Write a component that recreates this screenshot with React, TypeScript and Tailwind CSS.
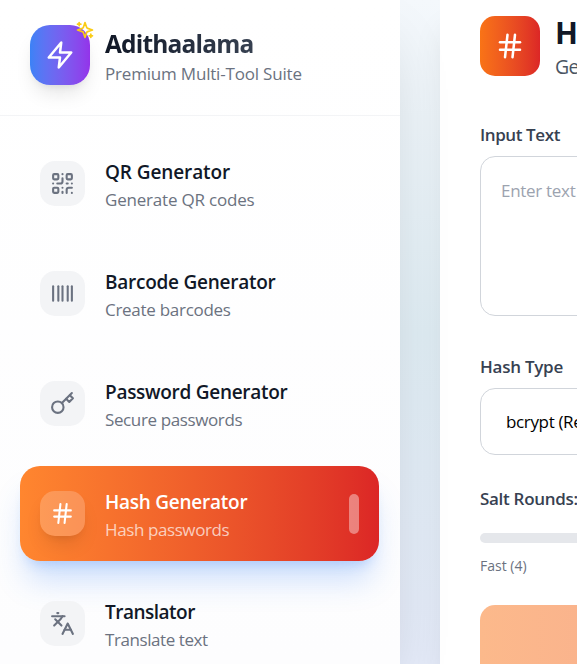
import React from "react";
import { QrCode, Barcode, Hash, Languages } from "lucide-react";

type Item = { title: string; sub: string; icon: React.ReactNode; titleCls: string; subCls: string; active?: boolean };

function KeyIcon() {
  return (
    <svg width="25" height="25" viewBox="0 0 24 24" fill="none" stroke="currentColor" strokeWidth="2" strokeLinecap="round" strokeLinejoin="round">
      <circle cx="7.5" cy="15.5" r="5.5" />
      <path d="m21 2-9.6 9.6" />
      <path d="m15.5 7.5 3 3L22 7l-3-3" />
    </svg>
  );
}

function SparkleIcon() {
  return (
    <svg className="absolute -top-[5px] -right-[5px] text-[#facc15]" width="20" height="20" viewBox="0 0 24 24" fill="none" stroke="currentColor" strokeWidth="2" strokeLinecap="round" strokeLinejoin="round">
      <path d="m12 3-1.912 5.813a2 2 0 0 1-1.275 1.275L3 12l5.813 1.912a2 2 0 0 1 1.275 1.275L12 21l1.912-5.813a2 2 0 0 1 1.275-1.275L21 12l-5.813-1.912a2 2 0 0 1-1.275-1.275L12 3Z" />
      <path d="M5 3v4" />
      <path d="M19 17v4" />
      <path d="M3 5h4" />
      <path d="M17 19h4" />
    </svg>
  );
}

const items: Item[] = [
  { title: "QR Generator", sub: "Generate QR codes", icon: <QrCode size={25} />, titleCls: "tracking-[-0.1px]", subCls: "tracking-[-0.2px]" },
  { title: "Barcode Generator", sub: "Create barcodes", icon: <Barcode size={25} />, titleCls: "tracking-[-0.25px]", subCls: "tracking-[-0.28px]" },
  { title: "Password Generator", sub: "Secure passwords", icon: <KeyIcon />, titleCls: "tracking-[-0.28px]", subCls: "tracking-[-0.38px]" },
  { title: "Hash Generator", sub: "Hash passwords", icon: <Hash size={25} />, titleCls: "tracking-[-0.25px]", subCls: "tracking-[-0.4px]", active: true },
  { title: "Translator", sub: "Translate text", icon: <Languages size={25} />, titleCls: "tracking-[-0.5px]", subCls: "tracking-[-0.42px]" },
];

function NavItem({ item }: { item: Item }) {
  return (
    <div
      className={
        "flex h-[95px] shrink-0 items-center rounded-[20px] px-5 " +
        (item.active
          ? "bg-linear-to-r from-[#ff862f] to-[#dc2626] shadow-[0_25px_31px_-6px_rgba(59,130,246,0.25),0_10px_12px_-7px_rgba(59,130,246,0.25)]"
          : "")
      }
    >
      <div
        className={
          "flex size-[45px] shrink-0 items-center justify-center rounded-[15px] " +
          (item.active ? "bg-white/20 text-white shadow-[0_12px_19px_-4px_rgba(0,0,0,0.1),0_5px_8px_-5px_rgba(0,0,0,0.1)]" : "bg-[#f3f4f6] text-[#6b7280]")
        }
      >
        {item.icon}
      </div>
      <div className="ml-5 flex-1 pt-px whitespace-nowrap">
        <div className={"text-[19px] leading-[30px] font-semibold " + item.titleCls + (item.active ? " text-white" : " text-[#111827]")}>
          {item.title}
        </div>
        <div className={"text-[17px] leading-[25px] " + item.subCls + (item.active ? " text-white/70" : " text-[#6b7280]")}>
          {item.sub}
        </div>
      </div>
      {item.active && <div className="h-10 w-[10px] rounded-full bg-white/40" />}
    </div>
  );
}

export default function App() {
  return (
    <div className="flex h-[664px] w-[577px] overflow-hidden bg-linear-to-b from-[#f4f8fc] via-[#e0edf4] to-[#e5ebf9] font-['Open_Sans','Noto_Sans',sans-serif]">
      <aside className="z-10 flex w-[400px] shrink-0 flex-col overflow-hidden bg-linear-to-b from-white to-[#fdfdfe] shadow-[0_31px_62px_-15px_rgba(0,0,0,0.15)]">
        <header className="flex h-[116px] shrink-0 items-center border-b border-[#f3f4f6] px-[30px] pb-[6px]">
          <div className="relative flex size-[60px] items-center justify-center rounded-[20px] bg-linear-to-r from-[#3b82f6] to-[#9333ea] text-white shadow-[0_12px_19px_-4px_rgba(0,0,0,0.1),0_5px_8px_-5px_rgba(0,0,0,0.1)]">
            <svg width="30" height="30" viewBox="0 0 24 24" fill="none" stroke="currentColor" strokeWidth="2" strokeLinecap="round" strokeLinejoin="round">
              <polygon points="13 2 3 14 12 14 11 22 21 10 12 10 13 2" />
            </svg>
            <SparkleIcon />
          </div>
          <div className="ml-[15px] pt-[2px] whitespace-nowrap">
            <h1 className="w-fit bg-linear-to-r from-[#111827] to-[#374151] bg-clip-text text-[24.5px] leading-[35px] font-bold tracking-[-0.8px] text-transparent">Adithaalama</h1>
            <p className="w-fit text-[17px] leading-[25px] tracking-[-0.19px] text-[#6b7280]">Premium Multi-Tool Suite</p>
          </div>
        </header>
        <nav className="flex flex-col gap-[15px] px-5 pt-5 pr-[21px]">
          {items.map((i) => (
            <NavItem key={i.title} item={i} />
          ))}
        </nav>
      </aside>
      <main className="ml-10 flex w-[800px] shrink-0 flex-col bg-white pl-10 whitespace-nowrap shadow-[0_25px_31px_-6px_rgba(0,0,0,0.1)]">
        <div className="mt-4 flex h-[60px] shrink-0 items-center">
          <div className="flex size-[60px] items-center justify-center rounded-[15px] bg-linear-to-r from-[#f97316] to-[#dc2626] text-white">
            <Hash size={30} />
          </div>
          <div className="ml-[15px] pt-1">
            <h2 className="text-[30px] leading-[38px] font-bold text-[#111827]">Hash Generator</h2>
            <p className="text-[19.5px] leading-[30px] tracking-[-0.6px] text-[#4b5563]">Generate secure hashes</p>
          </div>
        </div>
        <label className="mt-[46px] text-[17px] leading-[25px] font-semibold tracking-[-0.4px] text-[#374151]">Input Text</label>
        <div className="mt-[9px] h-40 w-[700px] shrink-0 rounded-[15px] border border-[#d1d5db] px-5 pt-[19px] text-[17px] leading-[30px] tracking-[-0.3px] text-[#9ca3af]">Enter text to hash</div>
        <label className="mt-[38px] text-[17px] leading-[25px] font-semibold tracking-[-0.25px] text-[#374151]">Hash Type</label>
        <div className="mt-[9px] flex h-[67px] w-[700px] shrink-0 items-center rounded-[15px] border border-[#d1d5db] px-[25px] pt-px text-[17px] tracking-[-0.35px] text-black">bcrypt (Recommended)</div>
        <label className="mt-[31px] text-[17px] leading-[25px] font-semibold tracking-[-0.3px] text-[#374151]">Salt Rounds: 10</label>
        <div className="mt-[22px] h-[10px] w-[700px] shrink-0 rounded-full bg-[#e5e7eb]" />
        <div className="mt-[13px] text-[14px] leading-5 text-[#6b7280]">Fast (4)</div>
        <div className="mt-[29px] h-20 w-[700px] shrink-0 rounded-[15px] bg-linear-to-r from-[#fcb98b] to-[#ee9393]" />
      </main>
    </div>
  );
}
